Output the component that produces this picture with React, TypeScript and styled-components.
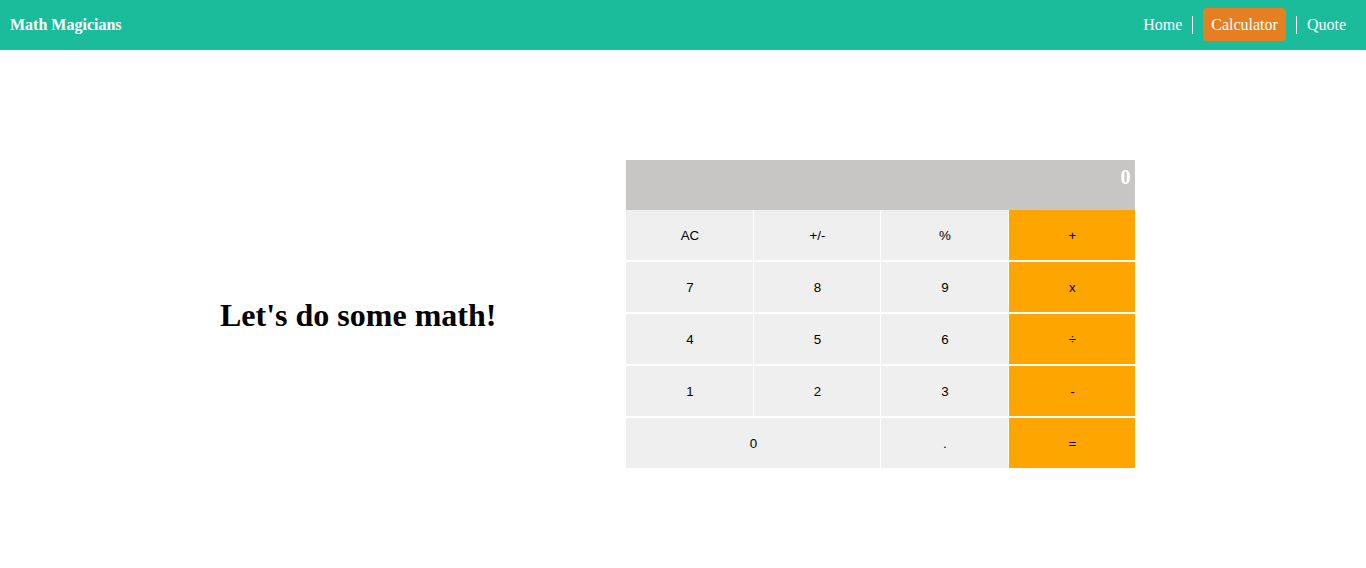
import React from 'react';
import styled, { createGlobalStyle } from 'styled-components';

const GlobalStyle = createGlobalStyle`
  html, body { margin: 0; padding: 0; background: #ffffff; }
  body { font-family: "Liberation Serif", "Times New Roman", serif; }
`;

const Nav = styled.nav`
  height: 50px;
  background: #1bbc9b;
  display: flex;
  align-items: center;
  justify-content: space-between;
  padding: 0 20px 0 10px;
  box-sizing: border-box;
  color: #ffffff;
`;

const Brand = styled.div`
  font-weight: bold;
  font-size: 16px;
`;

const Links = styled.ul`
  list-style: none;
  margin: 0;
  padding: 0;
  display: flex;
  align-items: center;
`;

const NavLink = styled.a<{ $active?: boolean }>`
  color: #ffffff;
  text-decoration: none;
  font-size: 16px;
  display: flex;
  align-items: center;
  height: 33px;
  margin-top: -1px;
  padding: ${(p) => (p.$active ? '0 8px' : '0')};
  background: ${(p) => (p.$active ? '#e67e22' : 'transparent')};
  border-radius: 4px;
`;

const Sep = styled.li`
  width: 1px;
  height: 18px;
  background: #ffffff;
  margin: 0 10px;
`;

const Main = styled.main`
  display: flex;
  align-items: center;
  padding: 110px 231px 0 220px;
  gap: 130px;
`;

const Heading = styled.h1`
  margin: 0;
  font-size: 32px;
  font-weight: bold;
  white-space: nowrap;
  padding-top: 2px;
`;

const Calc = styled.div`
  width: 509px;
  display: grid;
  grid-template-columns: 127px 126px 127px 126px;
  column-gap: 1px;
  row-gap: 2px;
`;

const Display = styled.div`
  grid-column: 1 / -1;
  height: 50px;
  margin-bottom: -2px;
  background: #c8c6c4;
  color: #ffffff;
  font-size: 20px;
  font-weight: bold;
  text-align: right;
  padding: 6px 5px 0 0;
  box-sizing: border-box;
`;

const Key = styled.button<{ $op?: boolean; $span?: number }>`
  height: 50px;
  border: none;
  margin: 0;
  padding: 0;
  background: ${(p) => (p.$op ? '#ffa500' : '#efefef')};
  color: #000000;
  font-family: "Liberation Sans", Arial, sans-serif;
  font-size: 13.33px;
  grid-column: span ${(p) => p.$span ?? 1};
`;

const keys: { label: string; op?: boolean; span?: number }[] = [
  { label: 'AC' }, { label: '+/-' }, { label: '%' }, { label: '+', op: true },
  { label: '7' }, { label: '8' }, { label: '9' }, { label: 'x', op: true },
  { label: '4' }, { label: '5' }, { label: '6' }, { label: '÷', op: true },
  { label: '1' }, { label: '2' }, { label: '3' }, { label: '-', op: true },
  { label: '0', span: 2 }, { label: '.' }, { label: '=', op: true },
];

export default function App() {
  return (
    <>
      <GlobalStyle />
      <Nav>
        <Brand>Math Magicians</Brand>
        <Links>
          <li><NavLink href="#">Home</NavLink></li>
          <Sep />
          <li><NavLink href="#" $active>Calculator</NavLink></li>
          <Sep />
          <li><NavLink href="#">Quote</NavLink></li>
        </Links>
      </Nav>
      <Main>
        <Heading>Let's do some math!</Heading>
        <Calc>
          <Display>0</Display>
          {keys.map((k) => (
            <Key key={k.label} $op={k.op} $span={k.span}>{k.label}</Key>
          ))}
        </Calc>
      </Main>
    </>
  );
}
